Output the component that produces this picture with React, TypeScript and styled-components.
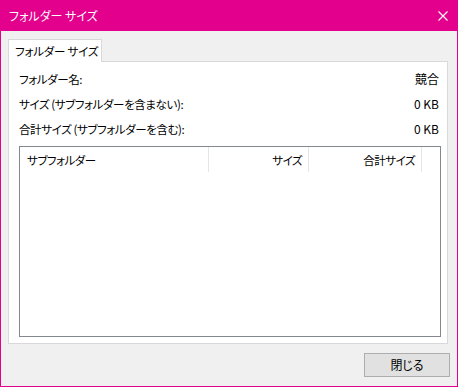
import React from "react";
import styled, { createGlobalStyle } from "styled-components";

const Global = createGlobalStyle`
  html, body { margin: 0; padding: 0; background: #f0f0f0; }
  * { box-sizing: border-box; }
  body {
    font-family: "Noto Sans CJK JP", "Noto Sans", sans-serif;
    font-size: 12px;
    font-feature-settings: "palt";
    color: #000;
  }
`;

const Window = styled.div`
  width: 458px;
  height: 387px;
  border: 1px solid #e3008c;
  background: #f0f0f0;
  display: flex;
  flex-direction: column;
`;

const TitleBar = styled.div`
  height: 30px;
  background: #e3008c;
  color: #fff;
  display: flex;
  align-items: center;
  justify-content: space-between;
  padding: 0 9px 0 8px;
  flex: none;
`;

const TitleText = styled.span`
  font-size: 12px;
  line-height: 16px;
  white-space: nowrap;
`;

const CloseIcon = styled.svg`
  width: 10px;
  height: 10px;
  display: block;
`;

const Body = styled.div`
  flex: 1;
  display: flex;
  flex-direction: column;
  padding: 8px 0 0 7px;
`;

const TabStrip = styled.div`
  display: flex;
  height: 22px;
`;

const Tab = styled.div`
  position: relative;
  z-index: 1;
  width: 94px;
  height: 23px;
  background: #fff;
  border: 1px solid #d9d9d9;
  border-bottom: none;
  padding-left: 6px;
  display: flex;
  align-items: center;
  line-height: 16px;
  font-size: 11.5px;
  letter-spacing: -0.2px;
  white-space: nowrap;
`;

const Panel = styled.div`
  width: 440px;
  height: 283px;
  background: #fff;
  border: 1px solid #d9d9d9;
  padding: 4px 6px 6px 10px;
  display: flex;
  flex-direction: column;
`;

const InfoRow = styled.div`
  height: 25px;
  display: flex;
  align-items: center;
  justify-content: space-between;
  padding-right: 2px;
  line-height: 16px;
  font-size: 11.5px;
  letter-spacing: -0.4px;
  white-space: nowrap;
`;

const Value = styled.span`
  letter-spacing: 0;
  font-size: 12px;
`;

const ListBox = styled.div`
  margin-top: 5px;
  height: 191px;
  border: 1px solid #828790;
  background: #fff;
`;

const Header = styled.div`
  display: flex;
  height: 25px;
`;

const HeaderCell = styled.div<{ $w: number; $right?: boolean }>`
  width: ${(p) => p.$w}px;
  height: 25px;
  border-right: 1px solid #e5e5e5;
  display: flex;
  align-items: center;
  justify-content: ${(p) => (p.$right ? "flex-end" : "flex-start")};
  padding: ${(p) => (p.$right ? "0 6px 0 0" : "0 0 0 7px")};
  line-height: 16px;
  font-size: 11.5px;
  letter-spacing: -0.5px;
  white-space: nowrap;
`;

const Footer = styled.div`
  display: flex;
  justify-content: flex-end;
  padding: 9px 7px 0 0;
`;

const Button = styled.button`
  width: 86px;
  height: 24px;
  background: #e1e1e1;
  border: 1px solid #adadad;
  font-family: inherit;
  font-size: 12px;
  font-feature-settings: "palt";
  color: #000;
  padding: 0;
  line-height: 16px;
`;

export default function App() {
  return (
    <>
      <Global />
      <Window>
        <TitleBar>
          <TitleText>フォルダー サイズ</TitleText>
          <CloseIcon viewBox="0 0 10 10">
            <path d="M0.5 0.5 L9.5 9.5 M9.5 0.5 L0.5 9.5" stroke="#fff" strokeWidth="1.1" fill="none" />
          </CloseIcon>
        </TitleBar>
        <Body>
          <TabStrip>
            <Tab>フォルダー サイズ</Tab>
          </TabStrip>
          <Panel>
            <InfoRow>
              <span>フォルダー名:</span>
              <Value>競合</Value>
            </InfoRow>
            <InfoRow>
              <span>サイズ (サブフォルダーを含まない):</span>
              <Value>0 KB</Value>
            </InfoRow>
            <InfoRow>
              <span>合計サイズ (サブフォルダーを含む):</span>
              <Value>0 KB</Value>
            </InfoRow>
            <ListBox>
              <Header>
                <HeaderCell $w={189}>サブフォルダー</HeaderCell>
                <HeaderCell $w={100} $right>サイズ</HeaderCell>
                <HeaderCell $w={113} $right>合計サイズ</HeaderCell>
              </Header>
            </ListBox>
          </Panel>
          <Footer>
            <Button>閉じる</Button>
          </Footer>
        </Body>
      </Window>
    </>
  );
}
